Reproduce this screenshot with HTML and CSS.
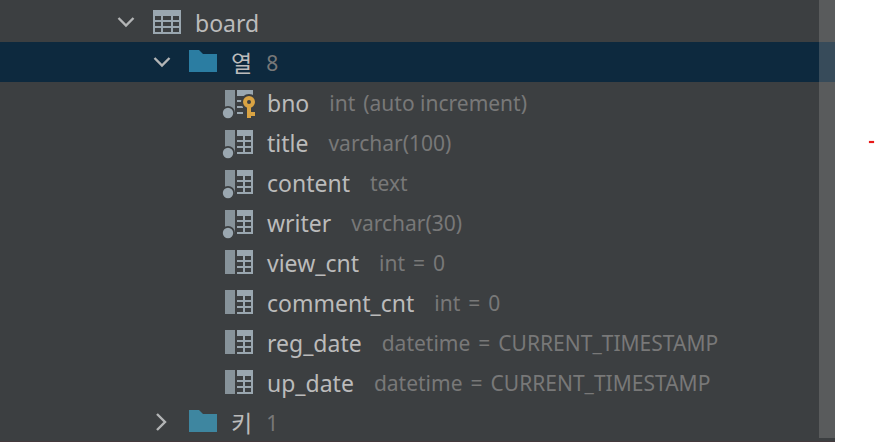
FILE: index.html
```
<!DOCTYPE html>
<html lang="ko">
<head>
<meta charset="utf-8">
<title>board</title>
<link rel="stylesheet" href="styles.css">
</head>
<body>
<svg class="defs" aria-hidden="true">
  <symbol id="down" viewBox="0 0 18 18"><path d="M1.5 5 9 12.5 16.5 5" fill="none" stroke="#b3b5b6" stroke-width="2.4"/></symbol>
  <symbol id="right" viewBox="0 0 18 18"><path d="M4 1 12 9 4 17" fill="none" stroke="#b3b5b6" stroke-width="2.4"/></symbol>
  <symbol id="table" viewBox="0 0 28 24"><path fill="#9aa7b0" fill-rule="evenodd" d="M0 0H28V24H0ZM2 6V10H8V6ZM10 6V10H18V6ZM20 6V10H26V6ZM2 12V16H8V12ZM10 12V16H18V12ZM20 12V16H26V12ZM2 18V22H8V18ZM10 18V22H18V18ZM20 18V22H26V18Z"/></symbol>
  <symbol id="folder" viewBox="0 0 28 24"><path fill="currentColor" d="M0 0H10L14 4H28V22H0Z"/></symbol>
  <symbol id="column" viewBox="0 0 28 24"><path fill="#87939a" d="M0 0H10V24H0Z"/><path fill="#9aa7b0" fill-rule="evenodd" d="M12 0H28V24H12V22H18V18H12V16H18V12H12V10H18V6H12ZM20 6V10H26V6ZM20 12V16H26V12ZM20 18V22H26V18Z"/></symbol>
  <symbol id="dot" viewBox="0 0 28 24"><circle cx="3" cy="23" r="7" fill="#3c3f41"/><circle cx="3" cy="23" r="5.2" fill="#9aa7b0"/></symbol>
  <symbol id="key" viewBox="0 0 28 24"><path fill="#87939a" d="M0 0H10V24H0Z"/><path fill="#9aa7b0" d="M12 0H28V6H12ZM12 10H18V12H12ZM12 16H18V18H12ZM12 22H18V24H12Z"/><circle cx="24" cy="12" r="8" fill="#3c3f41"/><path fill="#3c3f41" d="M20 12H28V28H20Z"/><circle cx="24" cy="12" r="4" fill="none" stroke="#d9a343" stroke-width="4"/><path fill="#d9a343" d="M22 17H26V22H30V26H26V28H22Z"/></symbol>
</svg>
<div class="page">
  <main class="panel">
    <ul class="tree">
      <li>
        <div class="row level-1"><button class="toggle" aria-label="board" aria-expanded="true"><svg><use href="#down"/></svg></button><svg class="icon"><use href="#table"/></svg><span class="name">board</span></div>
        <ul>
          <li>
            <div class="row level-2 selected"><button class="toggle" aria-label="열" aria-expanded="true"><svg><use href="#down"/></svg></button><svg class="icon"><use href="#folder"/></svg><span class="name">열</span><span class="detail">8</span></div>
            <ul>
              <li class="row level-3"><svg class="icon"><use href="#key"/><use href="#dot"/></svg><span class="name">bno</span><span class="detail"><span>int</span> <span>(auto increment)</span></span></li>
              <li class="row level-3"><svg class="icon"><use href="#column"/><use href="#dot"/></svg><span class="name">title</span><span class="detail">varchar(100)</span></li>
              <li class="row level-3"><svg class="icon"><use href="#column"/><use href="#dot"/></svg><span class="name">content</span><span class="detail">text</span></li>
              <li class="row level-3"><svg class="icon"><use href="#column"/><use href="#dot"/></svg><span class="name">writer</span><span class="detail">varchar(30)</span></li>
              <li class="row level-3"><svg class="icon"><use href="#column"/></svg><span class="name">view_cnt</span><span class="detail"><span>int</span> <span>=</span> <span>0</span></span></li>
              <li class="row level-3"><svg class="icon"><use href="#column"/></svg><span class="name">comment_cnt</span><span class="detail"><span>int</span> <span>=</span> <span>0</span></span></li>
              <li class="row level-3"><svg class="icon"><use href="#column"/></svg><span class="name">reg_date</span><span class="detail"><span>datetime</span> <span>=</span> <span>CURRENT_TIMESTAMP</span></span></li>
              <li class="row level-3"><svg class="icon"><use href="#column"/></svg><span class="name">up_date</span><span class="detail"><span>datetime</span> <span>=</span> <span>CURRENT_TIMESTAMP</span></span></li>
            </ul>
          </li>
          <li>
            <div class="row level-2"><button class="toggle" aria-label="키" aria-expanded="false"><svg><use href="#right"/></svg></button><svg class="icon"><use href="#folder"/></svg><span class="name">키</span><span class="detail">1</span></div>
          </li>
        </ul>
      </li>
    </ul>
    <div class="scrollbar"></div>
  </main>
  <aside class="margin"><span class="mark"></span></aside>
</div>
</body>
</html>
```
FILE: styles.css
```
* { box-sizing: border-box; }
body {
  margin: 0;
  background: #fff;
  font-family: "Noto Sans", "Noto Sans CJK KR", sans-serif;
}
.defs { position: absolute; width: 0; height: 0; }
.page { display: flex; min-height: 100vh; }
.panel {
  position: relative;
  flex: 1;
  padding-top: 2px;
  background: #3c3f41;
  box-shadow: inset 0 -1px #44393d;
}
ul { margin: 0; padding: 0; list-style: none; }
.row {
  display: flex;
  align-items: center;
  height: 40px;
  color: #bbb;
  white-space: nowrap;
}
.level-1 { padding-left: 117px; }
.level-2 { padding-left: 153px; }
.level-3 { padding-left: 225px; }
.selected { background: #0d293e; }
.toggle {
  width: 18px;
  height: 18px;
  margin-right: 18px;
  padding: 0;
  border: 0;
  background: none;
}
.toggle svg { display: block; width: 18px; height: 18px; }
.icon {
  flex: none;
  width: 28px;
  height: 24px;
  margin-right: 14px;
  overflow: visible;
  color: #3e86a0;
}
symbol { overflow: visible; }
.selected .icon { color: #2b7da2; }
.name, .detail { padding-top: 3px; line-height: 37px; }
.name { font-size: 23px; }
.detail {
  display: flex;
  gap: 8px;
  margin-left: 20px;
  color: #787878;
  font-size: 21px;
}
.level-2 .detail { margin-left: 14px; }
.scrollbar {
  position: absolute;
  top: 0;
  right: 0;
  bottom: 4px;
  width: 16px;
  background: rgba(166, 166, 166, 0.28);
}
.margin { position: relative; width: 40px; }
.mark {
  position: absolute;
  top: 141px;
  right: 1px;
  width: 5px;
  height: 2px;
  background: #e81818;
  box-shadow: 0 0 1px #e81818;
}
```
